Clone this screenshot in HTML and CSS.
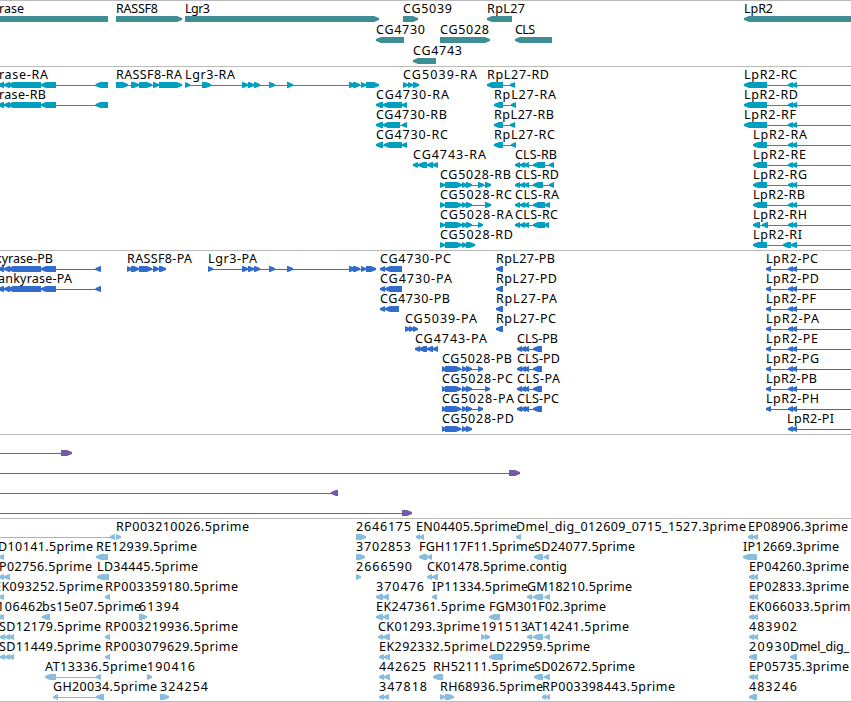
FILE: index.html
```html
<!DOCTYPE html>
<html lang="en">
<head>
  <meta charset="UTF-8">
  <meta name="viewport" content="width=device-width, initial-scale=1.0">
  <title>Genome Tracks</title>
  <link rel="stylesheet" href="styles.css">
</head>
<body>
  <main class="browser">
    <section class="track genes"><svg id="genes"></svg></section>
    <section class="track transcripts"><svg id="transcripts"></svg></section>
    <section class="track proteins"><svg id="proteins"></svg></section>
    <section class="track clones"><svg id="clones"></svg></section>
    <section class="track ests"><svg id="ests"></svg></section>
  </main>
  <script src="tracks.js"></script>
</body>
</html>
```
FILE: styles.css
```css
body {
  margin: 0;
  background-color: #fff;
  overflow: hidden;
}

.browser {
  display: flex;
  flex-direction: column;
  border-bottom: 1px solid #bbb;
}

.track {
  box-sizing: border-box;
  border-top: 1px solid #bbb;
}

.track svg {
  display: block;
  width: 100%;
  height: 100%;
}

.track text {
  font-family: 'Noto Sans', sans-serif;
  font-size: 12.5px;
  fill: #000;
}

.genes {
  height: 66px;
  color: #408e95;
}

.transcripts {
  height: 184px;
  color: #009fc0;
}

.proteins {
  height: 184px;
  color: #316ccc;
}

.clones {
  height: 84px;
  color: #7459a8;
}

.ests {
  height: 183px;
  color: #88bddd;
}

.feature {
  fill: currentColor;
}
```
FILE: tracks.js
```js
// feature: [row, label, label start, label end, strand, blocks]
const genes = [
  [0, 'rase', -1, 24, '', [[-10, 108]]],
  [0, 'RASSF8', 116, 158, '>', [[116, 182]]],
  [0, 'Lgr3', 185, 210, '>', [[185, 379]]],
  [0, 'CG5039', 403, 452, '>', [[403, 418]]],
  [0, 'RpL27', 487, 525, '<', [[487, 512]]],
  [0, 'LpR2', 744, 773, '<', [[744, 900]]],
  [1, 'CG4730', 376, 425, '<', [[376, 404]]],
  [1, 'CG5028', 440, 489, '>', [[440, 490]]],
  [1, 'CLS', 515, 535, '<', [[515, 552]]],
  [2, 'CG4743', 413, 462, '<', [[413, 436]]]
];

const tank = [[-20, -10], [-2, 4], [4, 10], [8, 41], [41, 56]];
const lgr = [[242, 248], [248, 254], [254, 260], [269, 275], [287, 293], [349, 355], [353, 360], [361, 366]];
const cg5028 = [[440, 445], [445, 462], [462, 467], [466, 472]];
const cls = [[515, 520], [520, 525], [524, 529]];
const lpr = [[788, 793], [792, 797], [900, 910]];

const transcripts = [
  [0, 'rase-RA', -1, 48, '<', [...tank, [95.5, 108]]],
  [1, 'rase-RB', -1, 46, '<', [...tank, [95.5, 108]]],
  [0, 'RASSF8-RA', 116, 182, '>', [[116, 128], [131, 139], [139, 152], [153, 159], [159, 182]]],
  [0, 'Lgr3-RA', 185, 235, '>', [[185, 190], [202, 211], ...lgr, [366, 379]]],
  [0, 'CG5039-RA', 403, 477, '>', [[403, 408], [408, 413], [413, 419]]],
  [1, 'CG4730-RA', 376, 449, '<', [[376, 383], [383, 402], [402, 407]]],
  [2, 'CG4730-RB', 376, 447, '<', [[376, 383], [383, 400], [402, 407]]],
  [3, 'CG4730-RC', 376, 448, '<', [[376, 383], [384, 402], [402, 407]]],
  [4, 'CG4743-RA', 413, 486, '<', [[413, 418], [418, 427], [427, 433], [433, 438]]],
  [5, 'CG5028-RB', 440, 511, '>', [...cg5028, [478, 484], [485, 491]]],
  [6, 'CG5028-RC', 440, 512, '>', [...cg5028, [485, 491]]],
  [7, 'CG5028-RA', 440, 513, '>', [...cg5028, [478, 483]]],
  [8, 'CG5028-RD', 440, 513, '>', [...cg5028.slice(0, 3), [466, 475]]],
  [0, 'RpL27-RD', 487, 549, '<', [[487, 503], [510, 515]]],
  [1, 'RpL27-RA', 494, 556, '<', [[494, 503], [511, 516]]],
  [2, 'RpL27-RB', 494, 554, '<', [[494, 503], [510, 515]]],
  [3, 'RpL27-RC', 494, 555, '<', [[494, 503], [511, 516]]],
  [4, 'CLS-RB', 515, 557, '<', [...cls, [533, 545], [549, 554]]],
  [5, 'CLS-RD', 515, 559, '<', [...cls, [533, 543], [549, 554]]],
  [6, 'CLS-RA', 515, 559, '<', [...cls, [533, 545], [545, 550]]],
  [7, 'CLS-RC', 515, 558, '<', [...cls, [533, 545], [544, 549]]],
  [0, 'LpR2-RC', 744, 797, '<', [[744, 767], ...lpr]],
  [1, 'LpR2-RD', 744, 798, '<', [[744, 767], ...lpr]],
  [2, 'LpR2-RF', 744, 796, '<', [[744, 767], ...lpr]],
  [3, 'LpR2-RA', 753, 807, '<', [[753, 767], ...lpr]],
  [4, 'LpR2-RE', 753, 806, '<', [[753, 767], ...lpr]],
  [5, 'LpR2-RG', 753, 807, '<', [[753, 767], ...lpr]],
  [6, 'LpR2-RB', 753, 805, '<', [[753, 767], ...lpr]],
  [7, 'LpR2-RH', 753, 807, '<', [[753, 760], [762, 768], ...lpr]],
  [8, 'LpR2-RI', 753, 802, '<', [[753, 767], [783, 791], [791, 797], [900, 910]]]
];

const cg5028p = [[442, 446], [445, 461], [462, 467], [466, 472]];
const clsp = [[517, 522], [521, 526], [524, 529], [533, 542]];

const proteins = [
  [0, 'kyrase-PB', -5, 53, '<', [...tank, [95.5, 101]]],
  [1, 'ankyrase-PA', -2, 72, '<', [...tank, [95.5, 101]]],
  [0, 'RASSF8-PA', 127, 192, '>', [[127, 132], [131, 139], [139, 152], [153, 159], [159, 166]]],
  [0, 'Lgr3-PA', 208, 257, '>', [[208, 213], ...lgr, [366, 376]]],
  [0, 'CG4730-PC', 380, 451, '<', [[380, 385], [385, 402]]],
  [1, 'CG4730-PA', 380, 452, '<', [[380, 385], [385, 402]]],
  [2, 'CG4730-PB', 380, 450, '<', [[380, 385], [385, 399]]],
  [3, 'CG5039-PA', 405, 477, '>', [[405, 410], [409, 414], [413, 418]]],
  [4, 'CG4743-PA', 415, 487, '<', [[415, 420], [419, 427], [427, 433], [433, 438]]],
  [5, 'CG5028-PB', 442, 512, '>', [...cg5028p, [478, 483]]],
  [6, 'CG5028-PC', 442, 513, '>', [...cg5028p, [485, 490]]],
  [7, 'CG5028-PA', 442, 514, '>', [...cg5028p, [478, 483]]],
  [8, 'CG5028-PD', 442, 514, '>', cg5028p],
  [0, 'RpL27-PB', 496, 555, '<', [[496, 503]]],
  [1, 'RpL27-PD', 496, 557, '<', [[496, 503]]],
  [2, 'RpL27-PA', 496, 557, '<', [[496, 503]]],
  [3, 'RpL27-PC', 496, 556, '<', [[496, 503]]],
  [4, 'CLS-PB', 517, 558, '<', clsp],
  [5, 'CLS-PD', 517, 560, '<', clsp],
  [6, 'CLS-PA', 517, 560, '<', clsp],
  [7, 'CLS-PC', 517, 559, '<', clsp],
  [0, 'LpR2-PC', 766, 818, '<', [[766, 771], ...lpr]],
  [1, 'LpR2-PD', 766, 819, '<', [[766, 771], ...lpr]],
  [2, 'LpR2-PF', 766, 816, '<', [[766, 771], ...lpr]],
  [3, 'LpR2-PA', 766, 819, '<', [[766, 771], ...lpr]],
  [4, 'LpR2-PE', 766, 818, '<', [[766, 771], ...lpr]],
  [5, 'LpR2-PG', 766, 819, '<', [[766, 771], ...lpr]],
  [6, 'LpR2-PB', 766, 817, '<', [[766, 771], ...lpr]],
  [7, 'LpR2-PH', 766, 819, '<', [[766, 771], ...lpr]],
  [8, 'LpR2-PI', 787, 834, '<', lpr]
];

const clones = [
  [0, '', 0, 0, '>', [[-20, -10], [61, 72]]],
  [1, '', 0, 0, '>', [[-20, -10], [509, 520]]],
  [2, '', 0, 0, '<', [[-20, -10], [331, 338]]],
  [3, '', 0, 0, '>', [[-20, -10], [402, 412]]]
];

const ests = [
  [0, '', 0, 0, '<', [[-20, -10], [110, 115]]],
  [0, 'RP003210026.5prime', 116, 249, '>', [[116, 121]]],
  [0, '2646175', 356, 411, '>', [[356, 366]]],
  [0, 'EN04405.5prime', 416, 517, '<', [[416, 420], [420, 424]]],
  [0, 'Dmel_dig_012609_0715_1527.3prime', 516, 746, '<', [[516, 521]]],
  [0, 'EP08906.3prime', 748, 848, '<', [[748, 753], [753, 758]]],
  [1, 'D10141.5prime', -2, 93, '<', [[-1, 4]]],
  [1, 'RE12939.5prime', 96, 197, '<', [[96, 108]]],
  [1, '3702853', 356, 411, '>', [[356, 365]]],
  [1, 'FGH117F11.5prime', 419, 535, '<', [[419, 427], [427, 432]]],
  [1, 'SD24077.5prime', 534, 635, '<', [[534, 543], [544, 549]]],
  [1, 'IP12669.3prime', 743, 839, '<', [[743, 757]]],
  [2, 'P02756.5prime', -1, 92, '<', [[-1, 4], [4, 10]]],
  [2, 'LD34445.5prime', 97, 198, '<', [[97, 109]]],
  [2, '2666590', 356, 412, '>', [[356, 361]]],
  [2, 'CK01478.5prime.contig', 427, 567, '<', [[427, 432], [432, 438]]],
  [2, 'EP04260.3prime', 749, 849, '<', [[749, 754], [753, 758]]],
  [3, 'EK093252.5prime', -6, 103, '<', [[-1, 4]]],
  [3, 'RP003359180.5prime', 105, 238, '<', [[105, 110]]],
  [3, '370476', 376, 424, '<', [[376, 383], [383, 389]]],
  [3, 'IP11334.5prime', 432, 528, '<', [[432, 437]]],
  [3, 'GM18210.5prime', 527, 632, '<', [[527, 532], [533, 543], [545, 550]]],
  [3, 'EP02833.3prime', 749, 849, '<', [[749, 754], [753, 758]]],
  [4, '106462', -3, 43, '<', [[-1, 2], [1, 4]]],
  [4, 'bs15e07.5prime', 42, 141, '<', [[42, 50]]],
  [4, '61394', 139, 179, '>', [[139, 147]]],
  [4, 'EK247361.5prime', 376, 485, '<', [[376, 383], [383, 389]]],
  [4, 'FGM301F02.3prime', 489, 606, '<', [[489, 500]]],
  [4, 'EK066033.5prime', 749, 858, '<', [[749, 754], [753, 758]]],
  [5, 'SD12179.5prime', -1, 101, '<', [[0, 5], [5, 10], [9, 14]]],
  [5, 'RP003219936.5prime', 105, 238, '<', [[105, 110]]],
  [5, 'CK01293.3prime', 378, 480, '<', [[378, 383], [383, 390]]],
  [5, '191513', 481, 528, '>', [[481, 486], [485, 490]]],
  [5, 'AT14241.5prime', 527, 629, '<', [[527, 532], [533, 543], [545, 550]]],
  [5, '483902', 749, 797, '<', [[749, 754], [753, 758]]],
  [6, 'SD11449.5prime', -1, 101, '<', [[0, 5], [5, 10], [9, 14]]],
  [6, 'RP003079629.5prime', 105, 238, '<', [[105, 110]]],
  [6, 'EK292332.5prime', 379, 488, '<', [[379, 384], [384, 390]]],
  [6, 'LD22959.5prime', 489, 590, '<', [[489, 503]]],
  [6, '20930', 749, 790, '<', [[749, 757]]],
  [6, 'Dmel_dig_', 790, 849, '<', [[790, 797]]],
  [7, 'AT13336.5prime', 45, 147, '<', [[45, 56], [96, 101]]],
  [7, '190416', 147, 195, '>', [[147, 152]]],
  [7, '442625', 379, 426, '<', [[379, 384], [384, 390]]],
  [7, 'RH52111.5prime', 433, 535, '<', [[433, 443]]],
  [7, 'SD02672.5prime', 534, 635, '<', [[534, 543], [544, 550]]],
  [7, 'EP05735.3prime', 749, 849, '<', [[749, 754], [753, 758]]],
  [8, 'GH20034.5prime', 53, 157, '<', [[53, 58], [96, 104]]],
  [8, '324254', 160, 208, '>', [[160, 169]]],
  [8, '347818', 379, 427, '<', [[379, 384], [384, 389]]],
  [8, 'RH68936.5prime', 440, 543, '>', [[440, 445], [445, 454]]],
  [8, 'RP003398443.5prime', 542, 675, '<', [[542, 546], [546, 550]]],
  [8, '483246', 749, 797, '<', [[749, 757]]]
];

const SVG = 'http://www.w3.org/2000/svg';

// block body with an arrow head of up to 5px on the strand side
function blockPath(a, b, y, strand) {
  const head = Math.min(5, b - a);
  if (strand === '>') {
    return `M${a} ${y}H${b - head}L${b} ${y + 2}V${y + 4}L${b - head} ${y + 6}H${a}Z`;
  }
  if (strand === '<') {
    return `M${b} ${y}H${a + head}L${a} ${y + 2}V${y + 4}L${a + head} ${y + 6}H${b}Z`;
  }
  return `M${a} ${y}H${b}V${y + 6}H${a}Z`;
}

function drawTrack(id, features, pitch) {
  const svg = document.getElementById(id);
  features.forEach(([row, label, start, end, strand, blocks]) => {
    const y = 15 + row * pitch;
    const first = blocks[0][0] + 1;
    const last = blocks[blocks.length - 1][1] - 1;
    const path = document.createElementNS(SVG, 'path');
    path.setAttribute('class', 'feature');
    path.setAttribute('d', blocks.map(([a, b]) => blockPath(a, b, y, strand)).join(''));
    svg.appendChild(path);
    if (blocks.length > 1) {
      const line = document.createElementNS(SVG, 'rect');
      line.setAttribute('class', 'feature');
      line.setAttribute('x', first);
      line.setAttribute('y', y + 3);
      line.setAttribute('width', last - first);
      line.setAttribute('height', 1);
      svg.appendChild(line);
    }
    if (label) {
      const text = document.createElementNS(SVG, 'text');
      text.setAttribute('x', start);
      text.setAttribute('y', y - 3);
      text.setAttribute('textLength', end - start);
      text.textContent = label;
      svg.appendChild(text);
    }
  });
}

drawTrack('genes', genes, 21);
drawTrack('transcripts', transcripts, 20);
drawTrack('proteins', proteins, 20);
drawTrack('clones', clones, 20);
drawTrack('ests', ests, 20);
```
